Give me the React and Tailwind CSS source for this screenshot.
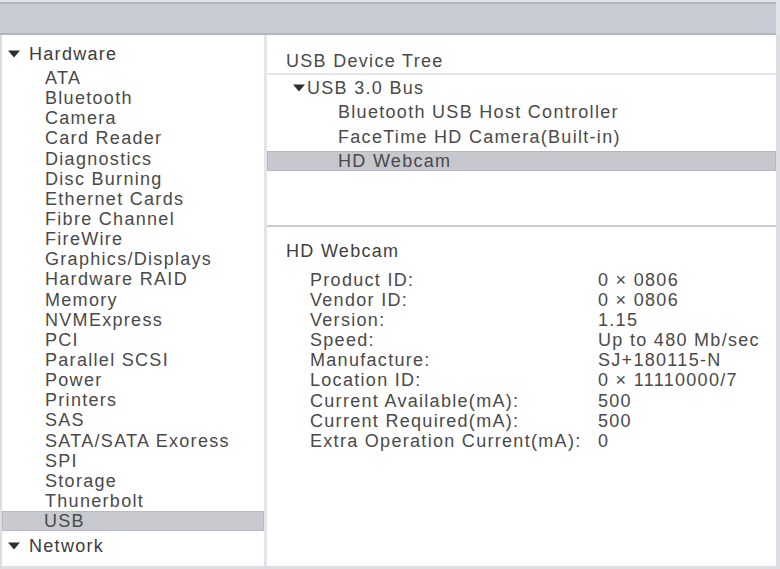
import React from "react";

const hardware = [
  "ATA",
  "Bluetooth",
  "Camera",
  "Card Reader",
  "Diagnostics",
  "Disc Burning",
  "Ethernet Cards",
  "Fibre Channel",
  "FireWire",
  "Graphics/Displays",
  "Hardware RAID",
  "Memory",
  "NVMExpress",
  "PCI",
  "Parallel SCSI",
  "Power",
  "Printers",
  "SAS",
  "SATA/SATA Exoress",
  "SPI",
  "Storage",
  "Thunerbolt",
];

const details = [
  ["Product ID:", "0 \u00d7 0806"],
  ["Vendor ID:", "0 \u00d7 0806"],
  ["Version:", "1.15"],
  ["Speed:", "Up to 480 Mb/sec"],
  ["Manufacture:", "SJ+180115-N"],
  ["Location ID:", "0 \u00d7 11110000/7"],
  ["Current Available(mA):", "500"],
  ["Current Required(mA):", "500"],
  ["Extra Operation Current(mA):", "0"],
];

function Disclosure() {
  return (
    <svg width="12" height="8" viewBox="0 0 12 8" className="shrink-0">
      <path d="M0 0.5 L12 0.5 L6 7.5 Z" fill="#2f2f2f" />
    </svg>
  );
}

export default function App() {
  return (
    <div
      className="w-[780px] h-[569px] bg-white flex flex-col overflow-hidden text-[#4a4a4a] text-[18px] tracking-[1.3px]"
      style={{ fontFamily: '"Liberation Sans", Arial, sans-serif' }}
    >
      {/* toolbar */}
      <div className="h-[35px] shrink-0 bg-[#e2e3e7] pt-[2px] pr-[4px]">
        <div className="h-full bg-[#c9ccd4] border-t-[2px] border-b-[2px] border-[#b3b7be]" />
      </div>

      <div className="flex-1 flex min-h-0 border-l-[2px] border-r-[4px] border-b-[3px] border-[#dcdde3]">
        {/* source list */}
        <div className="w-[262px] shrink-0 flex flex-col pt-[9px] leading-[20px]">
          <div className="flex items-center h-[20px] pl-[6px] gap-[9px] text-[#3c3c3c]">
            <Disclosure />
            <span>Hardware</span>
          </div>
          <div className="mt-[4px] flex flex-col">
            {hardware.map((name) => (
              <div key={name} className="h-[20.15px] pl-[43px] whitespace-nowrap">
                {name}
              </div>
            ))}
            <div className="h-[20px] pl-[41px] bg-[#c8cad0] border border-[#b8bbc1] leading-[18px]">
              USB
            </div>
          </div>
          <div className="flex items-center h-[20px] mt-[5px] pl-[6px] gap-[9px] text-[#3c3c3c]">
            <Disclosure />
            <span>Network</span>
          </div>
        </div>

        {/* divider */}
        <div className="w-[3px] shrink-0 bg-[#e4e4ea]" />

        {/* content */}
        <div className="flex-1 flex flex-col min-w-0 leading-[20px]">
          <div className="h-[40px] shrink-0 flex items-end pl-[19px] pb-[2px] border-b-[2px] border-[#e6e6eb]">
            USB Device Tree
          </div>

          <div className="h-[150px] shrink-0 flex flex-col gap-[4.3px] pt-[3px]">
            <div className="flex items-center h-[20px] pl-[26px] gap-[2px]">
              <Disclosure />
              <span>USB 3.0 Bus</span>
            </div>
            <div className="h-[20px] pl-[71px] whitespace-nowrap">Bluetooth USB Host Controller</div>
            <div className="h-[20px] pl-[71px] whitespace-nowrap">FaceTime HD Camera(Built-in)</div>
            <div className="h-[20px] pl-[70px] bg-[#c6c8ce] border border-[#b4b7bd] leading-[18px] whitespace-nowrap">
              HD Webcam
            </div>
          </div>

          <div className="h-[2px] shrink-0 bg-[#c8ccd4]" />

          <div className="flex flex-col pt-[14px] pl-[19px]">
            <div className="h-[20px] text-[#3f3f3f]">HD Webcam</div>
            <div className="mt-[9px] grid grid-cols-[288px_1fr] pl-[24px]">
              {details.map(([label, value]) => (
                <React.Fragment key={label}>
                  <div className="h-[20.1px] whitespace-nowrap">{label}</div>
                  <div className="h-[20.1px] whitespace-nowrap">{value}</div>
                </React.Fragment>
              ))}
            </div>
          </div>
        </div>
      </div>
    </div>
  );
}
